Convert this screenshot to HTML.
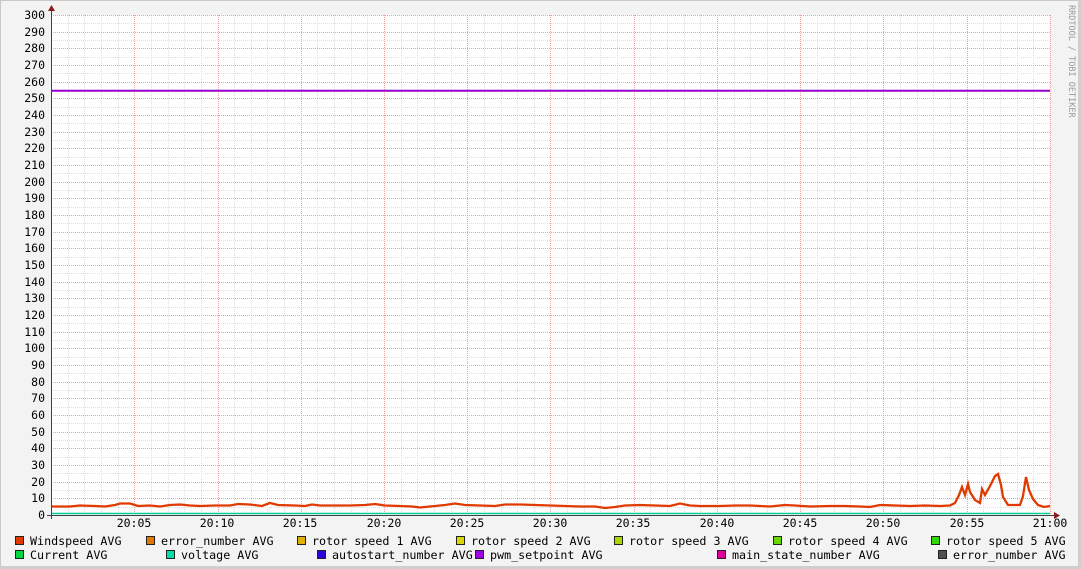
<!DOCTYPE html>
<html><head><meta charset="utf-8"><style>
html,body{margin:0;padding:0;background:#f3f3f3;}
svg{display:block;font-family:"DejaVu Sans Mono","Liberation Mono",monospace;}
</style></head><body>
<svg width="1081" height="569" viewBox="0 0 1081 569" xmlns="http://www.w3.org/2000/svg">
<rect x="0" y="0" width="1081" height="569" fill="#f3f3f3"/>
<rect x="0.5" y="0.5" width="1079" height="567" fill="none" stroke="#c8c8c8"/>
<rect x="1078" y="0" width="3" height="569" fill="#cfcfcf"/>
<rect x="0" y="566" width="1081" height="3" fill="#cfcfcf"/>
<rect x="51" y="15" width="999" height="500" fill="#fff"/>
<g shape-rendering="crispEdges" fill="none" stroke-dasharray="1,1">
<path stroke="#dedede" d="M51 23.5H1051M51 40.5H1051M51 57.5H1051M51 73.5H1051M51 90.5H1051M51 107.5H1051M51 123.5H1051M51 140.5H1051M51 157.5H1051M51 173.5H1051M51 190.5H1051M51 207.5H1051M51 223.5H1051M51 240.5H1051M51 257.5H1051M51 273.5H1051M51 290.5H1051M51 307.5H1051M51 323.5H1051M51 340.5H1051M51 357.5H1051M51 373.5H1051M51 390.5H1051M51 407.5H1051M51 423.5H1051M51 440.5H1051M51 457.5H1051M51 473.5H1051M51 490.5H1051M51 507.5H1051
M68.5 15V515M84.5 15V515M101.5 15V515M118.5 15V515M151.5 15V515M168.5 15V515M184.5 15V515M201.5 15V515M234.5 15V515M251.5 15V515M267.5 15V515M284.5 15V515M317.5 15V515M334.5 15V515M351.5 15V515M367.5 15V515M401.5 15V515M417.5 15V515M434.5 15V515M451.5 15V515M484.5 15V515M501.5 15V515M517.5 15V515M534.5 15V515M567.5 15V515M584.5 15V515M600.5 15V515M617.5 15V515M650.5 15V515M667.5 15V515M684.5 15V515M700.5 15V515M734.5 15V515M750.5 15V515M767.5 15V515M784.5 15V515M817.5 15V515M834.5 15V515M850.5 15V515M867.5 15V515M900.5 15V515M917.5 15V515M933.5 15V515M950.5 15V515M983.5 15V515M1000.5 15V515M1017.5 15V515M1033.5 15V515"/>
<path stroke="#f0a0a0" d="M51 15.5H1051M51 32.5H1051M51 48.5H1051M51 65.5H1051M51 82.5H1051M51 98.5H1051M51 115.5H1051M51 132.5H1051M51 148.5H1051M51 165.5H1051M51 182.5H1051M51 198.5H1051M51 215.5H1051M51 232.5H1051M51 248.5H1051M51 265.5H1051M51 282.5H1051M51 298.5H1051M51 315.5H1051M51 332.5H1051M51 348.5H1051M51 365.5H1051M51 382.5H1051M51 398.5H1051M51 415.5H1051M51 432.5H1051M51 448.5H1051M51 465.5H1051M51 482.5H1051M51 498.5H1051
M134.5 15V515M218.5 15V515M301.5 15V515M384.5 15V515M467.5 15V515M550.5 15V515M634.5 15V515M717.5 15V515M800.5 15V515M883.5 15V515M967.5 15V515M1050.5 15V515"/>
</g>
<g font-size="11.5" fill="#000" text-anchor="end">
<text x="45" y="19">300</text><text x="45" y="36">290</text><text x="45" y="52">280</text><text x="45" y="69">270</text><text x="45" y="86">260</text><text x="45" y="102">250</text><text x="45" y="119">240</text><text x="45" y="136">230</text><text x="45" y="152">220</text><text x="45" y="169">210</text><text x="45" y="186">200</text><text x="45" y="202">190</text><text x="45" y="219">180</text><text x="45" y="236">170</text><text x="45" y="252">160</text><text x="45" y="269">150</text><text x="45" y="286">140</text><text x="45" y="302">130</text><text x="45" y="319">120</text><text x="45" y="336">110</text><text x="45" y="352">100</text><text x="45" y="369">90</text><text x="45" y="386">80</text><text x="45" y="402">70</text><text x="45" y="419">60</text><text x="45" y="436">50</text><text x="45" y="452">40</text><text x="45" y="469">30</text><text x="45" y="486">20</text><text x="45" y="502">10</text><text x="45" y="519">0</text>
</g>
<g font-size="11.5" fill="#000" text-anchor="middle">
<text x="134" y="527">20:05</text><text x="217" y="527">20:10</text><text x="300" y="527">20:15</text><text x="384" y="527">20:20</text><text x="467" y="527">20:25</text><text x="550" y="527">20:30</text><text x="633" y="527">20:35</text><text x="717" y="527">20:40</text><text x="800" y="527">20:45</text><text x="883" y="527">20:50</text><text x="967" y="527">20:55</text><text x="1050" y="527">21:00</text>
</g>
<line x1="51" y1="90.8" x2="1050" y2="90.8" stroke="#9900cc" stroke-width="2"/>
<line x1="51" y1="513.5" x2="1050" y2="513.5" stroke="#00cc99" stroke-width="1.5"/>
<polyline fill="none" stroke="#e03a00" stroke-width="2.3" points="51,506.5 70,506.5 80,505.5 95,506 105,506.5 115,505 120,503.5 130,503.5 138,506 150,505.5 160,506.5 170,505 180,504.5 190,505.5 200,506 215,505.5 230,505.5 238,504 250,504.5 262,506 270,503 278,505 295,505.5 305,506 312,504.5 320,505.5 340,505.5 350,505.5 365,505 375,504 385,505.5 400,506 412,506.5 420,507.5 430,506.5 445,505 455,503.5 465,505 480,505.5 495,506 505,504.5 520,504.5 535,505 550,505.5 565,506 580,506.5 595,506.5 605,508 615,507 625,505.5 640,505 655,505.5 670,506 680,503.5 690,505.5 700,506 720,506 735,505.5 750,505.5 770,506.5 785,505 795,505.5 810,506.5 830,506 845,506 860,506.5 870,507 880,505 895,505.5 910,506 925,505.5 940,506 950,505.5 955,503 959,495 962,487 965,495 968,484 970,492 975,500 980,503 982,489 985,495 990,486 995,476 998,474 1001,485 1003,497 1008,505 1020,505 1023,496 1026,477 1029,490 1033,499 1038,505 1044,507 1050,506"/>
<line x1="47" y1="515.5" x2="1055" y2="515.5" stroke="#404040"/>
<line x1="51.5" y1="519" x2="51.5" y2="10" stroke="#404040"/>
<polygon points="48,11 55,11 51.5,5" fill="#8b1a1a"/>
<polygon points="1054,512 1054,519 1060,515.5" fill="#8b1a1a"/>
<text x="1069" y="5" font-size="8.5" fill="#999" transform="rotate(90 1069 5)">RRDTOOL / TOBI OETIKER</text>
<g font-size="11.7" fill="#000" stroke="#222" stroke-width="1">
<rect x="15.5" y="536.5" width="8" height="8" fill="#e03a00"/><text x="30" y="545" stroke="none">Windspeed AVG</text>
<rect x="146.5" y="536.5" width="8" height="8" fill="#e07800"/><text x="161" y="545" stroke="none">error_number AVG</text>
<rect x="297.5" y="536.5" width="8" height="8" fill="#e0b000"/><text x="312" y="545" stroke="none">rotor speed 1 AVG</text>
<rect x="456.5" y="536.5" width="8" height="8" fill="#d8d800"/><text x="471" y="545" stroke="none">rotor speed 2 AVG</text>
<rect x="614.5" y="536.5" width="8" height="8" fill="#a8d800"/><text x="629" y="545" stroke="none">rotor speed 3 AVG</text>
<rect x="773.5" y="536.5" width="8" height="8" fill="#68d800"/><text x="788" y="545" stroke="none">rotor speed 4 AVG</text>
<rect x="931.5" y="536.5" width="8" height="8" fill="#30d800"/><text x="946" y="545" stroke="none">rotor speed 5 AVG</text>
<rect x="15.5" y="550.5" width="8" height="8" fill="#00d840"/><text x="30" y="559" stroke="none">Current AVG</text>
<rect x="166.5" y="550.5" width="8" height="8" fill="#00e0a8"/><text x="181" y="559" stroke="none">voltage AVG</text>
<rect x="317.5" y="550.5" width="8" height="8" fill="#3000e0"/><text x="332" y="559" stroke="none">autostart_number AVG</text>
<rect x="475.5" y="550.5" width="8" height="8" fill="#a000e0"/><text x="490" y="559" stroke="none">pwm_setpoint AVG</text>
<rect x="717.5" y="550.5" width="8" height="8" fill="#e000a0"/><text x="732" y="559" stroke="none">main_state_number AVG</text>
<rect x="938.5" y="550.5" width="8" height="8" fill="#505050"/><text x="953" y="559" stroke="none">error_number AVG</text>
</g>
</svg>
</body></html>
